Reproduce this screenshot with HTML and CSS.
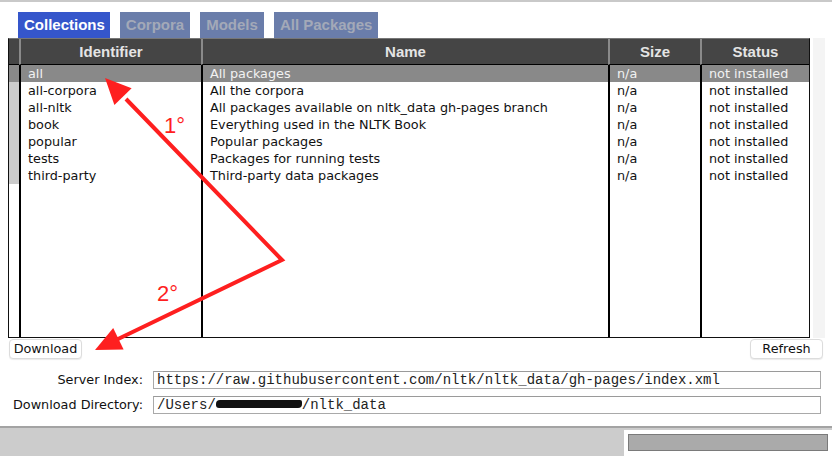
FILE: index.html
```html
<!DOCTYPE html>
<html>
<head>
<meta charset="utf-8">
<link rel="stylesheet" href="styles.css">
</head>
<body>
<div class="topline"></div>
<div class="tabs">
  <div class="tab active">Collections</div>
  <div class="tab">Corpora</div>
  <div class="tab">Models</div>
  <div class="tab">All Packages</div>
</div>
<div class="main">
  <div class="table">
    <div class="col c0">
      <div class="hd"></div>
      <div class="bd">
        <div class="cell sel"></div><div class="cell fill"></div><div class="cell fill"></div><div class="cell fill"></div><div class="cell fill"></div><div class="cell fill"></div><div class="cell fill"></div>
      </div>
    </div>
    <div class="col c1">
      <div class="hd">Identifier</div>
      <div class="bd">
        <div class="cell sel">all</div><div class="cell">all-corpora</div><div class="cell">all-nltk</div><div class="cell">book</div><div class="cell">popular</div><div class="cell">tests</div><div class="cell">third-party</div>
      </div>
    </div>
    <div class="col c2">
      <div class="hd">Name</div>
      <div class="bd">
        <div class="cell sel">All packages</div><div class="cell">All the corpora</div><div class="cell">All packages available on nltk_data gh-pages branch</div><div class="cell">Everything used in the NLTK Book</div><div class="cell">Popular packages</div><div class="cell">Packages for running tests</div><div class="cell">Third-party data packages</div>
      </div>
    </div>
    <div class="col c3">
      <div class="hd">Size</div>
      <div class="bd">
        <div class="cell sel">n/a</div><div class="cell">n/a</div><div class="cell">n/a</div><div class="cell">n/a</div><div class="cell">n/a</div><div class="cell">n/a</div><div class="cell">n/a</div>
      </div>
    </div>
    <div class="col c4">
      <div class="hd">Status</div>
      <div class="bd">
        <div class="cell sel">not installed</div><div class="cell">not installed</div><div class="cell">not installed</div><div class="cell">not installed</div><div class="cell">not installed</div><div class="cell">not installed</div><div class="cell">not installed</div>
      </div>
    </div>
  </div>
  <div class="vstrip"></div>
</div>
<div class="buttons">
  <div class="btn">Download</div>
  <div class="btn">Refresh</div>
</div>
<div class="form">
  <div class="lbl">Server Index:</div>
  <div class="field">https://raw.githubusercontent.com/nltk/nltk_data/gh-pages/index.xml</div>
  <div class="lbl">Download Directory:</div>
  <div class="field">/Users/<span class="redact"></span>/nltk_data</div>
</div>
<div class="status">
  <div class="progress-box"><div class="progress"></div></div>
</div>
<svg class="overlay" width="832" height="456" viewBox="0 0 832 456">
  <polyline points="126,99 282,260 116,340" fill="none" stroke="#fe1f1f" stroke-width="4" stroke-linejoin="miter"/>
  <polygon points="105,78 131.6,88.2 114.4,105" fill="#fe1f1f"/>
  <polygon points="95,350 113.2,327.9 123.6,349.5" fill="#fe1f1f"/>
  <text x="164" y="133" class="num">1°</text>
  <text x="157" y="301" class="num">2°</text>
</svg>
</body>
</html>
```
FILE: styles.css
```css
* { box-sizing: border-box; }
html, body { margin: 0; padding: 0; }
body {
  width: 832px;
  height: 456px;
  overflow: hidden;
  position: relative;
  background: #fff;
  font-family: "DejaVu Sans", sans-serif;
  font-size: 12.8px;
  color: #111;
}
.topline {
  height: 2px;
  background: #c9c9c9;
}
.tabs {
  display: flex;
  gap: 10px;
  margin-top: 10px;
  padding-left: 18px;
  height: 26px;
}
.tab {
  font-family: "Liberation Sans", Arial, sans-serif;
  font-weight: bold;
  font-size: 15px;
  line-height: 26px;
  padding: 0 6px;
  background: #6a7daa;
  color: #a3a9b8;
}
.tab.active {
  background: #3556cb;
  color: #fff;
  padding: 0 5px 0 6px;
}
.main {
  display: flex;
  padding-left: 8px;
  height: 300px;
}
.table {
  width: 802px;
  height: 300px;
  display: flex;
  border: 1px solid #111;
  border-top-color: #777;
  background: #fff;
}
.col {
  display: flex;
  flex-direction: column;
}
.c0 { width: 10px; }
.c1 { width: 182px; }
.c2 { width: 407px; }
.c3 { width: 92px; }
.c4 { width: 109px; }
.hd {
  height: 26px;
  background: #454545;
  border-bottom: 1px solid #000;
  color: #e4e4e4;
  font-family: "Liberation Sans", Arial, sans-serif;
  font-weight: bold;
  font-size: 15px;
  line-height: 25px;
  text-align: center;
}
.bd {
  flex: 1;
}
.c1 .hd, .c2 .hd, .c3 .hd, .c4 .hd { border-left: 2px solid #8a8a8a; }
.c1 .bd, .c2 .bd, .c3 .bd, .c4 .bd { border-left: 2px solid #000; }
.cell {
  height: 17px;
  line-height: 17px;
  padding-left: 7px;
  white-space: nowrap;
}
.cell.fill { background: #cbcbcb; }
.cell.sel { background: #898989; color: #f2f2f2; }
.vstrip {
  width: 12px;
  margin-left: 3px;
  background: #f4f4f4;
}
.buttons {
  display: flex;
  justify-content: space-between;
  padding: 1px 9px 0 9px;
}
.btn {
  width: 73px;
  height: 20px;
  line-height: 18px;
  text-align: center;
  border: 1px solid #dcdcdc;
  border-radius: 4px;
  background: #fff;
  box-shadow: 0 1px 1px rgba(0,0,0,0.08);
}
.form {
  display: grid;
  grid-template-columns: 143px 668px;
  column-gap: 10px;
  row-gap: 7px;
  margin-top: 12px;
}
.lbl {
  text-align: right;
  line-height: 18px;
  height: 18px;
}
.field {
  height: 18px;
  border: 1px solid #a9a9a9;
  border-top-color: #9a9a9a;
  font-family: "Liberation Mono", "Courier New", monospace;
  font-size: 14px;
  line-height: 16px;
  padding-left: 3px;
  color: #222;
  white-space: nowrap;
  overflow: hidden;
}
.redact {
  display: inline-block;
  width: 86px;
  height: 8px;
  background: #111;
  border-radius: 4px 2px 4px 3px;
  vertical-align: 1px;
}
.status {
  margin-top: 12px;
  border-top: 2px solid #a3a3a3;
  background: #cccccc;
  height: 30px;
  display: flex;
  justify-content: flex-end;
  padding-top: 2px;
}
.progress-box {
  width: 208px;
  height: 26px;
  background: #fff;
  padding: 4px 4px 5px 4px;
}
.progress {
  height: 17px;
  background: #aaaaaa;
  border: 1px solid #7a7a7a;
}
.overlay {
  position: absolute;
  left: 0;
  top: 0;
  pointer-events: none;
}
.num {
  font-family: "Liberation Sans", Arial, sans-serif;
  font-size: 22px;
  fill: #fe1f1f;
}
```
